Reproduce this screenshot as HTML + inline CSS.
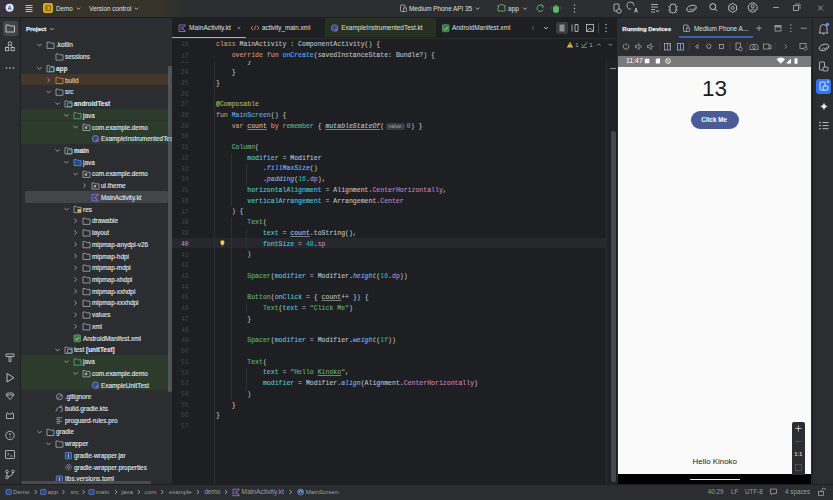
<!DOCTYPE html><html><head><meta charset='utf-8'><style>
*{margin:0;padding:0;box-sizing:border-box}
html,body{width:833px;height:500px;overflow:hidden;background:#2B2D30;font-family:"Liberation Sans",sans-serif;color:#DFE1E5}
.a{position:absolute}
.t{position:absolute;white-space:nowrap;line-height:1}
.code{position:absolute;white-space:pre;font-family:"Liberation Mono",monospace;font-size:6.53px;color:#BCBEC4;-webkit-text-stroke:0.12px currentColor}
.ln{position:absolute;font-family:"Liberation Mono",monospace;font-size:6.3px;color:#41444A;text-align:right;width:20px;white-space:pre}
.hint{display:inline-block;background:#393B40;color:#8C8F94;font-family:"Liberation Sans",sans-serif;font-size:5.5px;border-radius:2px;padding:0 2px;margin:0 2px 0 2px;line-height:7px;vertical-align:0px}
.row{position:absolute;left:20px;width:148px;height:11.73px}
.tree{position:absolute;white-space:nowrap;font-size:6.6px;color:#DFE1E5;line-height:1;-webkit-text-stroke:0.15px currentColor}
svg{position:absolute;overflow:visible}
</style></head><body>
<div class='a' style='left:0;top:0;width:833px;height:17px;background:linear-gradient(90deg,#37313F 0px,#37332A 35px,#36332A 160px,#2B2D30 192px)'></div>
<div class='a' style='left:0;top:17px;width:833px;height:1px;background:#1E1F22'></div>
<div class='a' style='left:20px;top:18px;width:1px;height:466px;background:#1E1F22'></div>
<div class='a' style='left:172px;top:18px;width:444px;height:466px;background:#1E1F22'></div>
<div class='a' style='left:616px;top:18px;width:1px;height:466px;background:#1E1F22'></div>
<div class='a' style='left:812px;top:18px;width:1px;height:466px;background:#1E1F22'></div>
<div class='a' style='left:0;top:484px;width:833px;height:1px;background:#1E1F22'></div>
<div class='a' style='left:172px;top:238.3px;width:434px;height:10.2px;background:#26282E'></div>
<div class='a' style='left:214px;top:60px;width:0.8px;height:424px;background:#2C2E31'></div>
<div class='a' style='left:230.68px;top:217.92px;width:0.8px;height:182.41px;background:#2E3033'></div>
<div class='a' style='left:230.68px;top:153.54px;width:0.8px;height:53.65px;background:#2E3033'></div>
<div class='a' style='left:246.36px;top:164.27px;width:0.8px;height:21.46px;background:#2E3033'></div>
<div class='a' style='left:246.36px;top:368.14px;width:0.8px;height:21.46px;background:#2E3033'></div>
<div class='a' style='left:246.36px;top:228.65px;width:0.8px;height:21.46px;background:#2E3033'></div>
<div class='a' style='left:246.36px;top:303.76px;width:0.8px;height:10.73px;background:#2E3033'></div>
<div class='ln' style='left:168.5px;top:58.37px;'>23</div>
<div class='code' style='left:216.0px;top:58.17px'><span style='color:#BCBEC4;'>        }</span></div>
<div class='ln' style='left:168.5px;top:69.10px;'>24</div>
<div class='code' style='left:216.0px;top:68.90px'><span style='color:#BCBEC4;'>    }</span></div>
<div class='ln' style='left:168.5px;top:79.83px;'>25</div>
<div class='code' style='left:216.0px;top:79.63px'><span style='color:#BCBEC4;'>}</span></div>
<div class='ln' style='left:168.5px;top:90.56px;'>26</div>
<div class='code' style='left:216.0px;top:90.36px'></div>
<div class='ln' style='left:168.5px;top:101.29px;'>27</div>
<div class='code' style='left:216.0px;top:101.09px'><span style='color:#B3AE60;'>@Composable</span></div>
<div class='ln' style='left:168.5px;top:112.02px;'>28</div>
<div class='code' style='left:216.0px;top:111.82px'><span style='color:#CF8E6D;'>fun </span><span style='color:#56A8F5;'>MainScreen</span><span style='color:#BCBEC4;'>() {</span></div>
<div class='ln' style='left:168.5px;top:122.75px;'>29</div>
<div class='code' style='left:216.0px;top:122.55px'><span style='color:#BCBEC4;'>    </span><span style='color:#CF8E6D;'>var </span><span style='color:#BCBEC4;text-decoration:underline;text-decoration-color:rgba(188,190,196,.6);text-underline-offset:1px;'>count</span><span style='color:#CF8E6D;'> by </span><span style='color:#5FAE80;'>remember</span><span style='color:#BCBEC4;'> { </span><span style='color:#BCBEC4;font-style:italic;text-decoration:underline;text-decoration-color:rgba(188,190,196,.6);text-underline-offset:1px;'>mutableStateOf</span><span style='color:#BCBEC4;'>(</span><span class='hint'>value:</span><span style='color:#2AACB8;'>0</span><span style='color:#BCBEC4;'>) }</span></div>
<div class='ln' style='left:168.5px;top:133.48px;'>30</div>
<div class='code' style='left:216.0px;top:133.28px'></div>
<div class='ln' style='left:168.5px;top:144.21px;'>31</div>
<div class='code' style='left:216.0px;top:144.01px'><span style='color:#BCBEC4;'>    </span><span style='color:#5FAE80;'>Column</span><span style='color:#BCBEC4;'>(</span></div>
<div class='ln' style='left:168.5px;top:154.94px;'>32</div>
<div class='code' style='left:216.0px;top:154.74px'><span style='color:#BCBEC4;'>        </span><span style='color:#56C1D6;'>modifier</span><span style='color:#BCBEC4;'> = Modifier</span></div>
<div class='ln' style='left:168.5px;top:165.67px;'>33</div>
<div class='code' style='left:216.0px;top:165.47px'><span style='color:#BCBEC4;'>            .</span><span style='color:#78AEF0;font-style:italic;'>fillMaxSize</span><span style='color:#BCBEC4;'>()</span></div>
<div class='ln' style='left:168.5px;top:176.40px;'>34</div>
<div class='code' style='left:216.0px;top:176.20px'><span style='color:#BCBEC4;'>            .</span><span style='color:#78AEF0;font-style:italic;'>padding</span><span style='color:#BCBEC4;'>(</span><span style='color:#2AACB8;'>16</span><span style='color:#BCBEC4;'>.</span><span style='color:#C77DBB;'>dp</span><span style='color:#BCBEC4;'>),</span></div>
<div class='ln' style='left:168.5px;top:187.13px;'>35</div>
<div class='code' style='left:216.0px;top:186.93px'><span style='color:#BCBEC4;'>        </span><span style='color:#56C1D6;'>horizontalAlignment</span><span style='color:#BCBEC4;'> = Alignment.</span><span style='color:#C77DBB;'>CenterHorizontally</span><span style='color:#BCBEC4;'>,</span></div>
<div class='ln' style='left:168.5px;top:197.86px;'>36</div>
<div class='code' style='left:216.0px;top:197.66px'><span style='color:#BCBEC4;'>        </span><span style='color:#56C1D6;'>verticalArrangement</span><span style='color:#BCBEC4;'> = Arrangement.</span><span style='color:#C77DBB;'>Center</span></div>
<div class='ln' style='left:168.5px;top:208.59px;'>37</div>
<div class='code' style='left:216.0px;top:208.39px'><span style='color:#BCBEC4;'>    ) {</span></div>
<div class='ln' style='left:168.5px;top:219.32px;'>38</div>
<div class='code' style='left:216.0px;top:219.12px'><span style='color:#BCBEC4;'>        </span><span style='color:#5FAE80;'>Text</span><span style='color:#BCBEC4;'>(</span></div>
<div class='ln' style='left:168.5px;top:230.05px;'>39</div>
<div class='code' style='left:216.0px;top:229.85px'><span style='color:#BCBEC4;'>            </span><span style='color:#56C1D6;'>text</span><span style='color:#BCBEC4;'> = </span><span style='color:#BCBEC4;text-decoration:underline;text-decoration-color:rgba(188,190,196,.6);text-underline-offset:1px;'>count</span><span style='color:#BCBEC4;'>.toString(),</span></div>
<div class='ln' style='left:168.5px;top:240.78px;color:#A8ADB5'>40</div>
<div class='code' style='left:216.0px;top:240.58px'><span style='color:#BCBEC4;'>            </span><span style='color:#56C1D6;'>fontSize</span><span style='color:#BCBEC4;'> = </span><span style='color:#2AACB8;'>48</span><span style='color:#BCBEC4;'>.</span><span style='color:#C77DBB;'>sp</span></div>
<div class='ln' style='left:168.5px;top:251.51px;'>41</div>
<div class='code' style='left:216.0px;top:251.31px'><span style='color:#BCBEC4;'>        )</span></div>
<div class='ln' style='left:168.5px;top:262.24px;'>42</div>
<div class='code' style='left:216.0px;top:262.04px'></div>
<div class='ln' style='left:168.5px;top:272.97px;'>43</div>
<div class='code' style='left:216.0px;top:272.77px'><span style='color:#BCBEC4;'>        </span><span style='color:#5FAE80;'>Spacer</span><span style='color:#BCBEC4;'>(</span><span style='color:#56C1D6;'>modifier</span><span style='color:#BCBEC4;'> = Modifier.</span><span style='color:#78AEF0;font-style:italic;'>height</span><span style='color:#BCBEC4;'>(</span><span style='color:#2AACB8;'>16</span><span style='color:#BCBEC4;'>.</span><span style='color:#C77DBB;'>dp</span><span style='color:#BCBEC4;'>))</span></div>
<div class='ln' style='left:168.5px;top:283.70px;'>44</div>
<div class='code' style='left:216.0px;top:283.50px'></div>
<div class='ln' style='left:168.5px;top:294.43px;'>45</div>
<div class='code' style='left:216.0px;top:294.23px'><span style='color:#BCBEC4;'>        </span><span style='color:#5FAE80;'>Button</span><span style='color:#BCBEC4;'>(</span><span style='color:#56C1D6;'>onClick</span><span style='color:#BCBEC4;'> = { </span><span style='color:#BCBEC4;text-decoration:underline;text-decoration-color:rgba(188,190,196,.6);text-underline-offset:1px;'>count</span><span style='color:#BCBEC4;'>++ }) {</span></div>
<div class='ln' style='left:168.5px;top:305.16px;'>46</div>
<div class='code' style='left:216.0px;top:304.96px'><span style='color:#BCBEC4;'>            </span><span style='color:#5FAE80;'>Text</span><span style='color:#BCBEC4;'>(</span><span style='color:#56C1D6;'>text</span><span style='color:#BCBEC4;'> = </span><span style='color:#6AAB73;'>&quot;Click Me&quot;</span><span style='color:#BCBEC4;'>)</span></div>
<div class='ln' style='left:168.5px;top:315.89px;'>47</div>
<div class='code' style='left:216.0px;top:315.69px'><span style='color:#BCBEC4;'>        }</span></div>
<div class='ln' style='left:168.5px;top:326.62px;'>48</div>
<div class='code' style='left:216.0px;top:326.42px'></div>
<div class='ln' style='left:168.5px;top:337.35px;'>49</div>
<div class='code' style='left:216.0px;top:337.15px'><span style='color:#BCBEC4;'>        </span><span style='color:#5FAE80;'>Spacer</span><span style='color:#BCBEC4;'>(</span><span style='color:#56C1D6;'>modifier</span><span style='color:#BCBEC4;'> = Modifier.</span><span style='color:#78AEF0;font-style:italic;'>weight</span><span style='color:#BCBEC4;'>(</span><span style='color:#2AACB8;'>1f</span><span style='color:#BCBEC4;'>))</span></div>
<div class='ln' style='left:168.5px;top:348.08px;'>50</div>
<div class='code' style='left:216.0px;top:347.88px'></div>
<div class='ln' style='left:168.5px;top:358.81px;'>51</div>
<div class='code' style='left:216.0px;top:358.61px'><span style='color:#BCBEC4;'>        </span><span style='color:#5FAE80;'>Text</span><span style='color:#BCBEC4;'>(</span></div>
<div class='ln' style='left:168.5px;top:369.54px;'>52</div>
<div class='code' style='left:216.0px;top:369.34px'><span style='color:#BCBEC4;'>            </span><span style='color:#56C1D6;'>text</span><span style='color:#BCBEC4;'> = </span><span style='color:#6AAB73;'>&quot;Hello </span><span style='color:#6AAB73;text-decoration:underline;text-decoration-color:rgba(188,190,196,.6);text-underline-offset:1px;'>Kinoko</span><span style='color:#6AAB73;'>&quot;</span><span style='color:#BCBEC4;'>,</span></div>
<div class='ln' style='left:168.5px;top:380.27px;'>53</div>
<div class='code' style='left:216.0px;top:380.07px'><span style='color:#BCBEC4;'>            </span><span style='color:#56C1D6;'>modifier</span><span style='color:#BCBEC4;'> = Modifier.</span><span style='color:#78AEF0;font-style:italic;'>align</span><span style='color:#BCBEC4;'>(</span><span style='color:#BCBEC4;'>Alignment.</span><span style='color:#C77DBB;'>CenterHorizontally</span><span style='color:#BCBEC4;'>)</span></div>
<div class='ln' style='left:168.5px;top:391.00px;'>54</div>
<div class='code' style='left:216.0px;top:390.80px'><span style='color:#BCBEC4;'>        )</span></div>
<div class='ln' style='left:168.5px;top:401.73px;'>55</div>
<div class='code' style='left:216.0px;top:401.53px'><span style='color:#BCBEC4;'>    }</span></div>
<div class='ln' style='left:168.5px;top:412.46px;'>56</div>
<div class='code' style='left:216.0px;top:412.26px'><span style='color:#BCBEC4;'>}</span></div>
<div class='ln' style='left:168.5px;top:423.19px;'>57</div>
<div class='code' style='left:216.0px;top:422.99px'></div>
<svg style='left:0;top:0' width='1' height='1'><path d='M220.3 242.3 a2.1 2.1 0 1 1 4.2 0 q0 1.1 -0.9 1.9 v0.9 h-2.4 v-0.9 q-0.9 -0.8 -0.9 -1.9 z' fill='#F2C94C'/><path d='M221.4 246 h2' stroke='#C9A030' stroke-width='0.6'/></svg>
<div class='a' style='left:172px;top:38px;width:434px;height:23px;background:#1E1F22;'></div>
<div class='ln' style='left:168.5px;top:41.00px'>16</div>
<div class='code' style='left:216.0px;top:40.80px'><span style='color:#CF8E6D;'>class </span><span style='color:#BCBEC4;'>MainActivity : ComponentActivity() {</span></div>
<div class='ln' style='left:168.5px;top:52.60px'>17</div>
<div class='code' style='left:216.0px;top:52.40px'><span style='color:#BCBEC4;'>    </span><span style='color:#CF8E6D;'>override fun </span><span style='color:#56A8F5;'>onCreate</span><span style='color:#BCBEC4;'>(savedInstanceState: Bundle?) {</span></div>
<div class='t' style='left:26px;top:25.6px;font-size:6px;font-weight:bold;color:#E6E8EC;-webkit-text-stroke:0.25px #E6E8EC'>Project</div>
<svg style='left:0;top:0' width='1' height='1'><polyline points='49.80,28.00 51.80,30.00 53.80,28.00' fill='none' stroke='#A8ADB5' stroke-width='1'/></svg>
<div class='a' style='left:21px;top:38px;width:151px;height:446px;overflow:hidden'>
<svg style='left:0;top:0' width='1' height='1'><polyline points='16.40,5.85 18.50,7.95 20.60,5.85' fill='none' stroke='#9A9EA5' stroke-width='1'/></svg>
<svg style='left:0;top:0' width='1' height='1'><path d='M26.00 4.20 h2.6 l0.8 0.9 h3.6 v5.3 h-7 z' fill='none' stroke='#A8ADB5' stroke-width='0.8' stroke-linejoin='round'/></svg>
<div class='tree' style='left:35.00px;top:4.40px;font-size:6.4px;font-weight:normal;color:#DFE1E5'>.kotlin</div>
<svg style='left:0;top:0' width='1' height='1'><path d='M35.00 15.93 h2.6 l0.8 0.9 h3.6 v5.3 h-7 z' fill='none' stroke='#A8ADB5' stroke-width='0.8' stroke-linejoin='round'/></svg>
<div class='tree' style='left:44.00px;top:16.13px;font-size:6.4px;font-weight:normal;color:#DFE1E5'>sessions</div>
<svg style='left:0;top:0' width='1' height='1'><polyline points='16.40,29.31 18.50,31.41 20.60,29.31' fill='none' stroke='#9A9EA5' stroke-width='1'/></svg>
<svg style='left:0;top:0' width='1' height='1'><path d='M26.00 27.66 h2.6 l0.8 0.9 h3.6 v5.3 h-7 z' fill='none' stroke='#A8ADB5' stroke-width='0.8' stroke-linejoin='round'/><rect x='28.50' y='29.86' width='4.5' height='3.5' fill='none' stroke='#5FB3A0' stroke-width='0.8'/></svg>
<div class='tree' style='left:35.00px;top:27.86px;font-size:6.4px;font-weight:bold;color:#DFE1E5'>app</div>
<div class='a' style='left:0px;top:35.59px;width:148px;height:11.73px;background:#44372A'></div>
<svg style='left:0;top:0' width='1' height='1'><polyline points='26.45,39.99 28.55,42.09 26.45,44.19' fill='none' stroke='#9A9EA5' stroke-width='1'/></svg>
<svg style='left:0;top:0' width='1' height='1'><path d='M35.00 39.39 h2.6 l0.8 0.9 h3.6 v5.3 h-7 z' fill='none' stroke='#D08A5A' stroke-width='0.8' stroke-linejoin='round'/></svg>
<div class='tree' style='left:44.00px;top:39.59px;font-size:6.4px;font-weight:normal;color:#D8C6A4'>build</div>
<svg style='left:0;top:0' width='1' height='1'><polyline points='25.40,52.77 27.50,54.87 29.60,52.77' fill='none' stroke='#9A9EA5' stroke-width='1'/></svg>
<svg style='left:0;top:0' width='1' height='1'><path d='M35.00 51.12 h2.6 l0.8 0.9 h3.6 v5.3 h-7 z' fill='none' stroke='#A8ADB5' stroke-width='0.8' stroke-linejoin='round'/></svg>
<div class='tree' style='left:44.00px;top:51.32px;font-size:6.4px;font-weight:normal;color:#DFE1E5'>src</div>
<svg style='left:0;top:0' width='1' height='1'><polyline points='34.40,64.50 36.50,66.60 38.60,64.50' fill='none' stroke='#9A9EA5' stroke-width='1'/></svg>
<svg style='left:0;top:0' width='1' height='1'><path d='M44.00 62.85 h2.6 l0.8 0.9 h3.6 v5.3 h-7 z' fill='none' stroke='#A8ADB5' stroke-width='0.8' stroke-linejoin='round'/><rect x='46.50' y='65.05' width='4.5' height='3.5' fill='none' stroke='#5FB3A0' stroke-width='0.8'/></svg>
<div class='tree' style='left:53.00px;top:63.05px;font-size:6.4px;font-weight:bold;color:#DFE1E5'>androidTest</div>
<div class='a' style='left:0px;top:70.78px;width:148px;height:11.73px;background:#2C3B2B'></div>
<svg style='left:0;top:0' width='1' height='1'><polyline points='43.40,76.23 45.50,78.33 47.60,76.23' fill='none' stroke='#9A9EA5' stroke-width='1'/></svg>
<svg style='left:0;top:0' width='1' height='1'><path d='M53.00 74.58 h2.6 l0.8 0.9 h3.6 v5.3 h-7 z' fill='none' stroke='#5FAE6A' stroke-width='0.8' stroke-linejoin='round'/></svg>
<div class='tree' style='left:62.00px;top:74.78px;font-size:6.4px;font-weight:normal;color:#DFE1E5'>java</div>
<div class='a' style='left:0px;top:82.51px;width:148px;height:11.73px;background:#2C3B2B'></div>
<svg style='left:0;top:0' width='1' height='1'><polyline points='52.40,87.96 54.50,90.06 56.60,87.96' fill='none' stroke='#9A9EA5' stroke-width='1'/></svg>
<svg style='left:0;top:0' width='1' height='1'><path d='M62.00 86.31 h2.6 l0.8 0.9 h3.6 v5.3 h-7 z' fill='none' stroke='#A8ADB5' stroke-width='0.8' stroke-linejoin='round'/><rect x='63.80' y='88.41' width='2.4' height='2.4' fill='#A8ADB5'/></svg>
<div class='tree' style='left:71.00px;top:86.51px;font-size:6.4px;font-weight:normal;color:#DFE1E5'>com.example.demo</div>
<div class='a' style='left:0px;top:94.24px;width:148px;height:11.73px;background:#2C3B2B'></div>
<svg style='left:0;top:0' width='1' height='1'><circle cx='74.50' cy='100.74' r='3.3' fill='#3B4A7A' stroke='#6E8FE8' stroke-width='0.7'/><circle cx='76.30' cy='102.54' r='1.6' fill='#8A5CC0'/></svg>
<div class='tree' style='left:80.00px;top:98.24px;font-size:6.4px;font-weight:normal;color:#DFE1E5'>ExampleInstrumentedTest</div>
<svg style='left:0;top:0' width='1' height='1'><polyline points='34.40,111.42 36.50,113.52 38.60,111.42' fill='none' stroke='#9A9EA5' stroke-width='1'/></svg>
<svg style='left:0;top:0' width='1' height='1'><path d='M44.00 109.77 h2.6 l0.8 0.9 h3.6 v5.3 h-7 z' fill='none' stroke='#A8ADB5' stroke-width='0.8' stroke-linejoin='round'/><rect x='46.50' y='111.97' width='4.5' height='3.5' fill='none' stroke='#5FB3A0' stroke-width='0.8'/></svg>
<div class='tree' style='left:53.00px;top:109.97px;font-size:6.4px;font-weight:bold;color:#DFE1E5'>main</div>
<svg style='left:0;top:0' width='1' height='1'><polyline points='43.40,123.15 45.50,125.25 47.60,123.15' fill='none' stroke='#9A9EA5' stroke-width='1'/></svg>
<svg style='left:0;top:0' width='1' height='1'><path d='M53.00 121.50 h2.6 l0.8 0.9 h3.6 v5.3 h-7 z' fill='#2F4A7A' stroke='#548AF7' stroke-width='0.8' stroke-linejoin='round'/></svg>
<div class='tree' style='left:62.00px;top:121.70px;font-size:6.4px;font-weight:normal;color:#DFE1E5'>java</div>
<svg style='left:0;top:0' width='1' height='1'><polyline points='52.40,134.88 54.50,136.98 56.60,134.88' fill='none' stroke='#9A9EA5' stroke-width='1'/></svg>
<svg style='left:0;top:0' width='1' height='1'><path d='M62.00 133.23 h2.6 l0.8 0.9 h3.6 v5.3 h-7 z' fill='none' stroke='#A8ADB5' stroke-width='0.8' stroke-linejoin='round'/><rect x='63.80' y='135.33' width='2.4' height='2.4' fill='#A8ADB5'/></svg>
<div class='tree' style='left:71.00px;top:133.43px;font-size:6.4px;font-weight:normal;color:#DFE1E5'>com.example.demo</div>
<svg style='left:0;top:0' width='1' height='1'><polyline points='62.45,145.56 64.55,147.66 62.45,149.76' fill='none' stroke='#9A9EA5' stroke-width='1'/></svg>
<svg style='left:0;top:0' width='1' height='1'><path d='M71.00 144.96 h2.6 l0.8 0.9 h3.6 v5.3 h-7 z' fill='none' stroke='#A8ADB5' stroke-width='0.8' stroke-linejoin='round'/><rect x='72.80' y='147.06' width='2.4' height='2.4' fill='#A8ADB5'/></svg>
<div class='tree' style='left:80.00px;top:145.16px;font-size:6.4px;font-weight:normal;color:#DFE1E5'>ui.theme</div>
<div class='a' style='left:4px;top:153.49px;width:143px;height:11.5px;background:#43454A;border-radius:2px'></div>
<svg style='left:0;top:0' width='1' height='1'><path d='M77.50 156.39 h-6.5 v6.5 h6.5' fill='none' stroke='#8E6BD6' stroke-width='0.9'/><path d='M77.30 156.79 L74.00 159.64 L77.30 162.49' fill='none' stroke='#A385E8' stroke-width='0.9'/><rect x='72.50' y='157.89' width='1.2' height='3.5' fill='#6A4FB0'/></svg>
<div class='tree' style='left:80.00px;top:156.89px;font-size:6.4px;font-weight:normal;color:#DFE1E5'>MainActivity.kt</div>
<svg style='left:0;top:0' width='1' height='1'><polyline points='43.40,170.07 45.50,172.17 47.60,170.07' fill='none' stroke='#9A9EA5' stroke-width='1'/></svg>
<svg style='left:0;top:0' width='1' height='1'><path d='M53.00 168.42 h2.6 l0.8 0.9 h3.6 v5.3 h-7 z' fill='none' stroke='#A8ADB5' stroke-width='0.8' stroke-linejoin='round'/><rect x='56.50' y='171.12' width='3.5' height='3' fill='#E0B24A'/></svg>
<div class='tree' style='left:62.00px;top:168.62px;font-size:6.4px;font-weight:normal;color:#DFE1E5'>res</div>
<svg style='left:0;top:0' width='1' height='1'><polyline points='53.45,180.75 55.55,182.85 53.45,184.95' fill='none' stroke='#9A9EA5' stroke-width='1'/></svg>
<svg style='left:0;top:0' width='1' height='1'><path d='M62.00 180.15 h2.6 l0.8 0.9 h3.6 v5.3 h-7 z' fill='none' stroke='#A8ADB5' stroke-width='0.8' stroke-linejoin='round'/></svg>
<div class='tree' style='left:71.00px;top:180.35px;font-size:6.4px;font-weight:normal;color:#DFE1E5'>drawable</div>
<svg style='left:0;top:0' width='1' height='1'><polyline points='53.45,192.48 55.55,194.58 53.45,196.68' fill='none' stroke='#9A9EA5' stroke-width='1'/></svg>
<svg style='left:0;top:0' width='1' height='1'><path d='M62.00 191.88 h2.6 l0.8 0.9 h3.6 v5.3 h-7 z' fill='none' stroke='#A8ADB5' stroke-width='0.8' stroke-linejoin='round'/></svg>
<div class='tree' style='left:71.00px;top:192.08px;font-size:6.4px;font-weight:normal;color:#DFE1E5'>layout</div>
<svg style='left:0;top:0' width='1' height='1'><polyline points='53.45,204.21 55.55,206.31 53.45,208.41' fill='none' stroke='#9A9EA5' stroke-width='1'/></svg>
<svg style='left:0;top:0' width='1' height='1'><path d='M62.00 203.61 h2.6 l0.8 0.9 h3.6 v5.3 h-7 z' fill='none' stroke='#A8ADB5' stroke-width='0.8' stroke-linejoin='round'/></svg>
<div class='tree' style='left:71.00px;top:203.81px;font-size:6.4px;font-weight:normal;color:#DFE1E5'>mipmap-anydpi-v26</div>
<svg style='left:0;top:0' width='1' height='1'><polyline points='53.45,215.94 55.55,218.04 53.45,220.14' fill='none' stroke='#9A9EA5' stroke-width='1'/></svg>
<svg style='left:0;top:0' width='1' height='1'><path d='M62.00 215.34 h2.6 l0.8 0.9 h3.6 v5.3 h-7 z' fill='none' stroke='#A8ADB5' stroke-width='0.8' stroke-linejoin='round'/></svg>
<div class='tree' style='left:71.00px;top:215.54px;font-size:6.4px;font-weight:normal;color:#DFE1E5'>mipmap-hdpi</div>
<svg style='left:0;top:0' width='1' height='1'><polyline points='53.45,227.67 55.55,229.77 53.45,231.87' fill='none' stroke='#9A9EA5' stroke-width='1'/></svg>
<svg style='left:0;top:0' width='1' height='1'><path d='M62.00 227.07 h2.6 l0.8 0.9 h3.6 v5.3 h-7 z' fill='none' stroke='#A8ADB5' stroke-width='0.8' stroke-linejoin='round'/></svg>
<div class='tree' style='left:71.00px;top:227.27px;font-size:6.4px;font-weight:normal;color:#DFE1E5'>mipmap-mdpi</div>
<svg style='left:0;top:0' width='1' height='1'><polyline points='53.45,239.40 55.55,241.50 53.45,243.60' fill='none' stroke='#9A9EA5' stroke-width='1'/></svg>
<svg style='left:0;top:0' width='1' height='1'><path d='M62.00 238.80 h2.6 l0.8 0.9 h3.6 v5.3 h-7 z' fill='none' stroke='#A8ADB5' stroke-width='0.8' stroke-linejoin='round'/></svg>
<div class='tree' style='left:71.00px;top:239.00px;font-size:6.4px;font-weight:normal;color:#DFE1E5'>mipmap-xhdpi</div>
<svg style='left:0;top:0' width='1' height='1'><polyline points='53.45,251.13 55.55,253.23 53.45,255.33' fill='none' stroke='#9A9EA5' stroke-width='1'/></svg>
<svg style='left:0;top:0' width='1' height='1'><path d='M62.00 250.53 h2.6 l0.8 0.9 h3.6 v5.3 h-7 z' fill='none' stroke='#A8ADB5' stroke-width='0.8' stroke-linejoin='round'/></svg>
<div class='tree' style='left:71.00px;top:250.73px;font-size:6.4px;font-weight:normal;color:#DFE1E5'>mipmap-xxhdpi</div>
<svg style='left:0;top:0' width='1' height='1'><polyline points='53.45,262.86 55.55,264.96 53.45,267.06' fill='none' stroke='#9A9EA5' stroke-width='1'/></svg>
<svg style='left:0;top:0' width='1' height='1'><path d='M62.00 262.26 h2.6 l0.8 0.9 h3.6 v5.3 h-7 z' fill='none' stroke='#A8ADB5' stroke-width='0.8' stroke-linejoin='round'/></svg>
<div class='tree' style='left:71.00px;top:262.46px;font-size:6.4px;font-weight:normal;color:#DFE1E5'>mipmap-xxxhdpi</div>
<svg style='left:0;top:0' width='1' height='1'><polyline points='53.45,274.59 55.55,276.69 53.45,278.79' fill='none' stroke='#9A9EA5' stroke-width='1'/></svg>
<svg style='left:0;top:0' width='1' height='1'><path d='M62.00 273.99 h2.6 l0.8 0.9 h3.6 v5.3 h-7 z' fill='none' stroke='#A8ADB5' stroke-width='0.8' stroke-linejoin='round'/></svg>
<div class='tree' style='left:71.00px;top:274.19px;font-size:6.4px;font-weight:normal;color:#DFE1E5'>values</div>
<svg style='left:0;top:0' width='1' height='1'><polyline points='53.45,286.32 55.55,288.42 53.45,290.52' fill='none' stroke='#9A9EA5' stroke-width='1'/></svg>
<svg style='left:0;top:0' width='1' height='1'><path d='M62.00 285.72 h2.6 l0.8 0.9 h3.6 v5.3 h-7 z' fill='none' stroke='#A8ADB5' stroke-width='0.8' stroke-linejoin='round'/></svg>
<div class='tree' style='left:71.00px;top:285.92px;font-size:6.4px;font-weight:normal;color:#DFE1E5'>xml</div>
<svg style='left:0;top:0' width='1' height='1'><rect x='53.00' y='296.85' width='6.5' height='7' rx='0.8' fill='#3E7A48' stroke='#5FB86A' stroke-width='0.6'/><path d='M54.50 300.65 l1.5 1.5 l2.2 -3' fill='none' stroke='#D8F0D8' stroke-width='0.7'/></svg>
<div class='tree' style='left:62.00px;top:297.65px;font-size:6.4px;font-weight:normal;color:#DFE1E5'>AndroidManifest.xml</div>
<svg style='left:0;top:0' width='1' height='1'><polyline points='34.40,310.83 36.50,312.93 38.60,310.83' fill='none' stroke='#9A9EA5' stroke-width='1'/></svg>
<svg style='left:0;top:0' width='1' height='1'><path d='M44.00 309.18 h2.6 l0.8 0.9 h3.6 v5.3 h-7 z' fill='none' stroke='#A8ADB5' stroke-width='0.8' stroke-linejoin='round'/><rect x='46.50' y='311.38' width='4.5' height='3.5' fill='none' stroke='#5FB3A0' stroke-width='0.8'/></svg>
<div class='tree' style='left:53.00px;top:309.38px;font-size:6.4px;font-weight:normal;color:#DFE1E5'>test <b>[unitTest]</b></div>
<div class='a' style='left:0px;top:317.11px;width:148px;height:11.73px;background:#2C3B2B'></div>
<svg style='left:0;top:0' width='1' height='1'><polyline points='43.40,322.56 45.50,324.66 47.60,322.56' fill='none' stroke='#9A9EA5' stroke-width='1'/></svg>
<svg style='left:0;top:0' width='1' height='1'><path d='M53.00 320.91 h2.6 l0.8 0.9 h3.6 v5.3 h-7 z' fill='none' stroke='#5FAE6A' stroke-width='0.8' stroke-linejoin='round'/></svg>
<div class='tree' style='left:62.00px;top:321.11px;font-size:6.4px;font-weight:normal;color:#DFE1E5'>java</div>
<div class='a' style='left:0px;top:328.84px;width:148px;height:11.73px;background:#2C3B2B'></div>
<svg style='left:0;top:0' width='1' height='1'><polyline points='52.40,334.29 54.50,336.39 56.60,334.29' fill='none' stroke='#9A9EA5' stroke-width='1'/></svg>
<svg style='left:0;top:0' width='1' height='1'><path d='M62.00 332.64 h2.6 l0.8 0.9 h3.6 v5.3 h-7 z' fill='none' stroke='#A8ADB5' stroke-width='0.8' stroke-linejoin='round'/><rect x='63.80' y='334.74' width='2.4' height='2.4' fill='#A8ADB5'/></svg>
<div class='tree' style='left:71.00px;top:332.84px;font-size:6.4px;font-weight:normal;color:#DFE1E5'>com.example.demo</div>
<div class='a' style='left:0px;top:340.57px;width:148px;height:11.73px;background:#2C3B2B'></div>
<svg style='left:0;top:0' width='1' height='1'><circle cx='74.50' cy='347.07' r='3.3' fill='#3B4A7A' stroke='#6E8FE8' stroke-width='0.7'/><circle cx='76.30' cy='348.87' r='1.6' fill='#8A5CC0'/></svg>
<div class='tree' style='left:80.00px;top:344.57px;font-size:6.4px;font-weight:normal;color:#DFE1E5'>ExampleUnitTest</div>
<svg style='left:0;top:0' width='1' height='1'><circle cx='38.50' cy='358.80' r='3' fill='none' stroke='#A8ADB5' stroke-width='0.8'/><path d='M36.50 360.80 L40.50 356.80' stroke='#A8ADB5' stroke-width='0.8'/></svg>
<div class='tree' style='left:44.00px;top:356.30px;font-size:6.4px;font-weight:normal;color:#DFE1E5'>.gitignore</div>
<svg style='left:0;top:0' width='1' height='1'><path d='M35.00 373.53 q0.5 -4 3.5 -4.5 q3 0 3 2.5 q0 2 -2 2' fill='none' stroke='#A8ADB5' stroke-width='0.8'/><circle cx='40.00' cy='368.53' r='1' fill='none' stroke='#7FA8E8' stroke-width='0.6'/></svg>
<div class='tree' style='left:44.00px;top:368.03px;font-size:6.4px;font-weight:normal;color:#DFE1E5'>build.gradle.kts</div>
<svg style='left:0;top:0' width='1' height='1'><path d='M35.50 379.76 h5.5 M35.50 381.56 h3.5 M35.50 383.36 h5.5 M35.50 385.16 h3.5' stroke='#A8ADB5' stroke-width='0.8'/></svg>
<div class='tree' style='left:44.00px;top:379.76px;font-size:6.4px;font-weight:normal;color:#DFE1E5'>proguard-rules.pro</div>
<svg style='left:0;top:0' width='1' height='1'><polyline points='16.40,392.94 18.50,395.04 20.60,392.94' fill='none' stroke='#9A9EA5' stroke-width='1'/></svg>
<svg style='left:0;top:0' width='1' height='1'><path d='M26.00 391.29 h2.6 l0.8 0.9 h3.6 v5.3 h-7 z' fill='none' stroke='#A8ADB5' stroke-width='0.8' stroke-linejoin='round'/></svg>
<div class='tree' style='left:35.00px;top:391.49px;font-size:6.4px;font-weight:normal;color:#DFE1E5'>gradle</div>
<svg style='left:0;top:0' width='1' height='1'><polyline points='25.40,404.67 27.50,406.77 29.60,404.67' fill='none' stroke='#9A9EA5' stroke-width='1'/></svg>
<svg style='left:0;top:0' width='1' height='1'><path d='M35.00 403.02 h2.6 l0.8 0.9 h3.6 v5.3 h-7 z' fill='none' stroke='#A8ADB5' stroke-width='0.8' stroke-linejoin='round'/></svg>
<div class='tree' style='left:44.00px;top:403.22px;font-size:6.4px;font-weight:normal;color:#DFE1E5'>wrapper</div>
<svg style='left:0;top:0' width='1' height='1'><rect x='44.30' y='414.45' width='6.2' height='6.5' rx='0.6' fill='#2F4A7A' stroke='#6E8FE8' stroke-width='0.7'/><path d='M47.50 415.75 v4' stroke='#C8D8F8' stroke-width='0.8'/></svg>
<div class='tree' style='left:53.00px;top:414.95px;font-size:6.4px;font-weight:normal;color:#DFE1E5'>gradle-wrapper.jar</div>
<svg style='left:0;top:0' width='1' height='1'><circle cx='47.50' cy='429.18' r='2.8' fill='none' stroke='#A8ADB5' stroke-width='0.9' stroke-dasharray='1.2 0.7'/><circle cx='47.50' cy='429.18' r='1.1' fill='none' stroke='#A8ADB5' stroke-width='0.7'/></svg>
<div class='tree' style='left:53.00px;top:426.68px;font-size:6.4px;font-weight:normal;color:#DFE1E5'>gradle-wrapper.properties</div>
<svg style='left:0;top:0' width='1' height='1'><rect x='35.30' y='437.91' width='6.2' height='6.5' rx='0.6' fill='#2F4A7A' stroke='#6E8FE8' stroke-width='0.7'/><path d='M38.50 439.21 v4' stroke='#C8D8F8' stroke-width='0.8'/></svg>
<div class='tree' style='left:44.00px;top:438.41px;font-size:6.4px;font-weight:normal;color:#DFE1E5'>libs.versions.toml</div>
</div>
<div class='a' style='left:168px;top:66px;width:4px;height:326px;background:rgba(130,134,140,0.42);border-radius:1px'></div>
<div class='a' style='left:21px;top:481px;width:130px;height:3px;background:#4A4C50;border-radius:2px'></div>
<svg style='left:0;top:0' width='1' height='1'><circle cx='9.6' cy='7.8' r='4' fill='#E6EAF4'/><path d='M8 10 L9.6 5.6 L11.2 10 M8.6 8.6 h2' stroke='#3D5BA8' stroke-width='0.9' fill='none'/></svg>
<svg style='left:0;top:0' width='1' height='1'><path d='M25.5 5.5 h7 M25.5 7.5 h7 M25.5 9.5 h7 M25.5 11.5 h7' stroke='#C9CCD2' stroke-width='0.9'/></svg>
<div class='a' style='left:43.2px;top:3.2px;width:9.8px;height:9.8px;border-radius:2.2px;background:#D9A826'></div>
<svg style='left:0;top:0' width='1' height='1'><rect x='45.8' y='5.6' width='4.6' height='5' rx='0.6' fill='none' stroke='#5A4210' stroke-width='0.8'/><path d='M47.2 6.8 v2.6' stroke='#5A4210' stroke-width='0.7'/></svg>
<div class='t' style='left:56px;top:5.9px;font-size:6.3px;color:#DFE1E5'>Demo</div>
<svg style='left:0;top:0' width='1' height='1'><polyline points='76.80,7.65 78.50,9.35 80.20,7.65' fill='none' stroke='#B0B4BA' stroke-width='1'/></svg>
<div class='t' style='left:89.3px;top:5.9px;font-size:6.36px;color:#DFE1E5'>Version control</div>
<svg style='left:0;top:0' width='1' height='1'><polyline points='134.80,7.65 136.50,9.35 138.20,7.65' fill='none' stroke='#B0B4BA' stroke-width='1'/></svg>
<svg style='left:0;top:0' width='1' height='1'><rect x='400.5' y='5' width='4.5' height='6.5' rx='0.6' fill='none' stroke='#B0B4BA' stroke-width='0.8'/><rect x='403.5' y='8' width='3' height='3.5' fill='#2B2D30' stroke='#B0B4BA' stroke-width='0.7'/></svg>
<div class='t' style='left:409px;top:5.8px;font-size:6.35px;color:#DFE1E5'>Medium Phone API 35</div>
<svg style='left:0;top:0' width='1' height='1'><polyline points='475.90,7.65 477.60,9.35 479.30,7.65' fill='none' stroke='#B0B4BA' stroke-width='1'/></svg>
<svg style='left:0;top:0' width='1' height='1'><path d='M498 11 v-3 a3.5 3.5 0 0 1 7 0 v3 z' fill='none' stroke='#5FB86A' stroke-width='0.9'/><path d='M498.5 7 l-1 -2 M504.5 7 l1 -2' stroke='#5FB86A' stroke-width='0.7'/></svg>
<div class='t' style='left:508px;top:5.8px;font-size:6.6px;color:#DFE1E5'>app</div>
<svg style='left:0;top:0' width='1' height='1'><polyline points='523.30,7.65 525.00,9.35 526.70,7.65' fill='none' stroke='#B0B4BA' stroke-width='1'/></svg>
<svg style='left:0;top:0' width='1' height='1'><path d='M542.5 6 a3.2 3.2 0 1 0 0.6 3.6' fill='none' stroke='#5FB86A' stroke-width='1'/><path d='M541 5 l2.2 0.8 l-0.6 2.2' fill='none' stroke='#5FB86A' stroke-width='0.9'/></svg>
<svg style='left:0;top:0' width='1' height='1'><path d='M553 6.5 h6 v3.5 a3 3 0 0 1 -6 0 z' fill='#5FB86A'/><path d='M554.5 6.5 a1.5 1.5 0 0 1 3 0' fill='#5FB86A'/><path d='M552 8 h-1 M560 8 h1' stroke='#5FB86A' stroke-width='0.8'/></svg>
<svg style='left:0;top:0' width='1' height='1'><circle cx='574.5' cy='5' r='0.7' fill='#C9CCD2'/><circle cx='574.5' cy='8.5' r='0.7' fill='#C9CCD2'/><circle cx='574.5' cy='12' r='0.7' fill='#C9CCD2'/></svg>
<svg style='left:0;top:0' width='1' height='1'><rect x='614' y='4' width='5' height='7' rx='0.5' fill='none' stroke='#C9CCD2' stroke-width='0.8'/><circle cx='619' cy='11' r='2.2' fill='#2B2D30' stroke='#C9CCD2' stroke-width='0.8'/></svg>
<svg style='left:0;top:0' width='1' height='1'><path d='M631 9 a3.5 3.5 0 1 1 3 -3.5' fill='none' stroke='#C9CCD2' stroke-width='0.8'/><path d='M634.5 12.5 l1.5 -4.5 l1.5 4.5 M635 11 h2' fill='none' stroke='#C9CCD2' stroke-width='0.8'/></svg>
<svg style='left:0;top:0' width='1' height='1'><path d='M651 4.5 h7 M651 7 h7 M651 9.5 h4 M651 12 h4' stroke='#C9CCD2' stroke-width='0.8'/><path d='M656 10 l1.5 2 l1.5 -2' fill='none' stroke='#C9CCD2' stroke-width='0.8'/></svg>
<svg style='left:0;top:0' width='1' height='1'><path d='M670 7 a3 3 0 0 1 6 0 v3 a3 3 0 0 1 -6 0 z' fill='none' stroke='#C9CCD2' stroke-width='0.8'/><path d='M668 6 l2 1.5 M678 6 l-2 1.5 M668 10 h2 M676 10 h2 M669 13 l1.5 -1.5 M677 13 l-1.5 -1.5 M671.5 4.5 l-1 -1 M674.5 4.5 l1 -1' stroke='#C9CCD2' stroke-width='0.7'/></svg>
<svg style='left:0;top:0' width='1' height='1'><ellipse cx='691.5' cy='8.5' rx='5' ry='3' fill='none' stroke='#C9CCD2' stroke-width='0.8' transform='rotate(-20 691.5 8.5)'/><path d='M689 10.5 l2 -1.5 l2 1 l2 -2.5' fill='none' stroke='#C9CCD2' stroke-width='0.7'/></svg>
<svg style='left:0;top:0' width='1' height='1'><circle cx='712.8' cy='6.6' r='3' fill='none' stroke='#C9CCD2' stroke-width='1'/><path d='M715 8.8 l2.3 2.3' stroke='#C9CCD2' stroke-width='1'/></svg>
<svg style='left:0;top:0' width='1' height='1'><path d='M732.7 3.4 l3.9 2.25 v4.5 l-3.9 2.25 l-3.9 -2.25 v-4.5 z' fill='none' stroke='#C9CCD2' stroke-width='0.9' stroke-linejoin='round'/><circle cx='732.7' cy='7.9' r='1.5' fill='none' stroke='#C9CCD2' stroke-width='0.8'/></svg>
<svg style='left:0;top:0' width='1' height='1'><circle cx='752.7' cy='7.5' r='4.5' fill='none' stroke='#C9CCD2' stroke-width='0.9'/><circle cx='752.7' cy='6.3' r='1.5' fill='none' stroke='#C9CCD2' stroke-width='0.8'/><path d='M749.7 10.8 a3.2 2.5 0 0 1 6 0' fill='none' stroke='#C9CCD2' stroke-width='0.8'/></svg>
<svg style='left:0;top:0' width='1' height='1'><path d='M773 7.5 h6' stroke='#A8ADB5' stroke-width='0.9'/></svg>
<svg style='left:0;top:0' width='1' height='1'><rect x='793.5' y='5.5' width='5' height='5' fill='none' stroke='#A8ADB5' stroke-width='0.8'/><path d='M795 4 h5 v5' fill='none' stroke='#A8ADB5' stroke-width='0.7'/></svg>
<svg style='left:0;top:0' width='1' height='1'><path d='M818 5.5 l5 5 M823 5.5 l-5 5' stroke='#A8ADB5' stroke-width='0.8'/></svg>
<div class='a' style='left:325px;top:18px;width:111px;height:19px;background:#25301F'></div>
<svg style='left:0;top:0' width='1' height='1'><path d='M185.50 25.00 h-6.5 v6.5 h6.5' fill='none' stroke='#8E6BD6' stroke-width='0.9'/><path d='M185.30 25.40 L182.00 28.25 L185.30 31.10' fill='none' stroke='#A385E8' stroke-width='0.9'/><rect x='180.50' y='26.50' width='1.2' height='3.5' fill='#6A4FB0'/></svg>
<div class='t' style='left:189px;top:24.8px;font-size:6.65px;color:#DFE1E5'>MainActivity.kt</div>
<svg style='left:0;top:0' width='1' height='1'><path d='M237.6 26.6 l2.6 2.6 M240.2 26.6 l-2.6 2.6' stroke='#7E8288' stroke-width='0.8'/></svg>
<svg style='left:0;top:0' width='1' height='1'><path d='M253 26 l-2 2 l2 2 M257 26 l2 2 l-2 2 M256 25.5 l-2 5' fill='none' stroke='#E8925A' stroke-width='0.8'/></svg>
<div class='t' style='left:262px;top:24.8px;font-size:6.35px;color:#DFE1E5'>activity_main.xml</div>
<svg style='left:0;top:0' width='1' height='1'><circle cx='334.60' cy='28.00' r='3.3' fill='#3B4A7A' stroke='#6E8FE8' stroke-width='0.7'/><circle cx='336.40' cy='29.80' r='1.6' fill='#8A5CC0'/></svg>
<div class='t' style='left:341.3px;top:24.8px;font-size:6.45px;color:#DFE1E5'>ExampleInstrumentedTest.kt</div>
<svg style='left:0;top:0' width='1' height='1'><rect x='442.50' y='24.70' width='6.5' height='7' rx='0.8' fill='#3E7A48' stroke='#5FB86A' stroke-width='0.6'/><path d='M444.00 28.50 l1.5 1.5 l2.2 -3' fill='none' stroke='#D8F0D8' stroke-width='0.7'/></svg>
<div class='t' style='left:452px;top:24.8px;font-size:6.45px;color:#DFE1E5'>AndroidManifest.xml</div>
<svg style='left:0;top:0' width='1' height='1'><polyline points='533.80,26.40 532.20,28.00 533.80,29.60' fill='none' stroke='#6F737A' stroke-width='1'/></svg>
<svg style='left:0;top:0' width='1' height='1'><polyline points='544.20,27.10 546.00,28.90 547.80,27.10' fill='none' stroke='#C9CCD2' stroke-width='1'/></svg>
<div class='a' style='left:556px;top:22px;width:12px;height:12px;background:#393B40;border-radius:2px'></div>
<svg style='left:0;top:0' width='1' height='1'><rect x='559.5' y='24.5' width='5' height='7' fill='#8C9096'/><path d='M572 24.5 v7 M575 24.5 h3 v7 h-3 z' fill='none' stroke='#C9CCD2' stroke-width='0.8'/><rect x='586.5' y='24.5' width='7' height='7' fill='none' stroke='#C9CCD2' stroke-width='0.8'/><path d='M587 31 l3 -3 l3 3' fill='none' stroke='#C9CCD2' stroke-width='0.7'/></svg>
<div class='a' style='left:598px;top:23px;width:1px;height:10px;background:#43454A'></div>
<svg style='left:0;top:0' width='1' height='1'><circle cx='606' cy='24.5' r='0.7' fill='#C9CCD2'/><circle cx='606' cy='28' r='0.7' fill='#C9CCD2'/><circle cx='606' cy='31.5' r='0.7' fill='#C9CCD2'/></svg>
<div class='a' style='left:172px;top:36.5px;width:74px;height:1.5px;background:#A9B0BA'></div>
<div class='a' style='left:172px;top:38px;width:444px;height:1px;background:#2B2D30'></div>
<svg style='left:0;top:0' width='1' height='1'><path d='M570 41.8 l3.2 5.6 h-6.4 z' fill='#E0B84A'/><path d='M570 43.5 v2' stroke='#3A3020' stroke-width='0.7'/></svg>
<div class='t' style='left:575.2px;top:41.8px;font-size:6px;color:#A8ADB5'>1</div>
<svg style='left:0;top:0' width='1' height='1'><path d='M581.5 44.5 l2 2 l3.5 -4' fill='none' stroke='#5FB86A' stroke-width='1'/><path d='M581 47.5 h6' stroke='#5FB86A' stroke-width='0.7'/></svg>
<div class='t' style='left:589.2px;top:41.8px;font-size:6px;color:#A8ADB5'>1</div>
<svg style='left:0;top:0' width='1' height='1'><polyline points='597.30,45.55 599.00,43.85 600.70,45.55' fill='none' stroke='#8C9096' stroke-width='1'/></svg>
<svg style='left:0;top:0' width='1' height='1'><polyline points='608.60,43.85 610.30,45.55 612.00,43.85' fill='none' stroke='#8C9096' stroke-width='1'/></svg>
<div class='a' style='left:606.8px;top:60px;width:9.2px;height:424px;background:#202124'></div>
<div class='a' style='left:606px;top:60px;width:0.8px;height:424px;background:#2A2C30'></div>
<div class='a' style='left:610.5px;top:131px;width:5px;height:351px;background:#45474B;border-radius:2px'></div>
<div class='a' style='left:609.5px;top:67.5px;width:6.5px;height:1px;background:#8C9096'></div>
<div class='t' style='left:622.3px;top:25.8px;font-size:6px;font-weight:bold;color:#E6E8EC;-webkit-text-stroke:0.25px #E6E8EC'>Running Devices</div>
<svg style='left:0;top:0' width='1' height='1'><rect x='683.5' y='25' width='4.5' height='6.5' rx='0.6' fill='none' stroke='#B0B4BA' stroke-width='0.8'/><rect x='686.5' y='28' width='3' height='3.5' fill='#2B2D30' stroke='#B0B4BA' stroke-width='0.7'/></svg>
<div class='t' style='left:694px;top:25.6px;font-size:6.43px;color:#DFE1E5'>Medium Phone A...</div>
<div class='a' style='left:678.5px;top:36.4px;width:74px;height:1.4px;background:#3A62B0'></div>
<svg style='left:0;top:0' width='1' height='1'><path d='M759 25.5 v5.5 M756.2 28.2 h5.6' stroke='#A8ADB5' stroke-width='0.8'/><rect x='775' y='25.5' width='6' height='5.5' fill='none' stroke='#A8ADB5' stroke-width='0.8'/><path d='M775 26.8 h6' stroke='#A8ADB5' stroke-width='1.2'/><circle cx='790.8' cy='25' r='0.65' fill='#A8ADB5'/><circle cx='790.8' cy='28.2' r='0.65' fill='#A8ADB5'/><circle cx='790.8' cy='31.4' r='0.65' fill='#A8ADB5'/><path d='M800.8 28.2 h6' stroke='#A8ADB5' stroke-width='0.8'/></svg>
<svg style='left:0;top:0' width='1' height='1'><path d='M624 44.5 a2.8 2.8 0 1 0 4 0' fill='none' stroke='#A8ADB5' stroke-width='0.8'/><path d='M626 43 v2.5' stroke='#A8ADB5' stroke-width='0.8'/><path d='M635.5 45.5 h1.5 l2 -2 v6 l-2 -2 h-1.5 z M640.5 45 a2 2 0 0 1 0 3' fill='none' stroke='#A8ADB5' stroke-width='0.75'/><path d='M647.5 45.5 h1.5 l2 -2 v6 l-2 -2 h-1.5 z M652 46.5 h1.5' fill='none' stroke='#A8ADB5' stroke-width='0.75'/><path d='M660 42 v9' stroke='#43454A' stroke-width='0.8'/><rect x='664.5' y='43.5' width='6' height='6.5' fill='none' stroke='#A8ADB5' stroke-width='0.8'/><path d='M667.5 43.5 v6.5' stroke='#6E9BE8' stroke-width='0.9'/><path d='M669 44.5 l1.2 1 l-1.2 1' fill='none' stroke='#6E9BE8' stroke-width='0.7'/><rect x='677.5' y='43.5' width='6' height='6.5' fill='none' stroke='#A8ADB5' stroke-width='0.8'/><path d='M680.5 43.5 v6.5' stroke='#6E9BE8' stroke-width='0.9'/><path d='M689 42 v9' stroke='#43454A' stroke-width='0.8'/><path d='M698 44.5 l-2.5 2 l2.5 2 z' fill='none' stroke='#A8ADB5' stroke-width='0.75'/><path d='M708.8 43.8 l2.3 1.7 l-0.9 2.7 h-2.8 l-0.9 -2.7 z' fill='none' stroke='#A8ADB5' stroke-width='0.75'/><rect x='719.5' y='44.5' width='4' height='4' fill='none' stroke='#A8ADB5' stroke-width='0.75'/><path d='M730 42 v9' stroke='#43454A' stroke-width='0.8'/><rect x='736' y='43' width='4.5' height='6.5' fill='none' stroke='#A8ADB5' stroke-width='0.75'/><circle cx='740.5' cy='49' r='1.8' fill='#2B2D30' stroke='#A8ADB5' stroke-width='0.7'/><path d='M747 42 v9' stroke='#43454A' stroke-width='0.8'/><path d='M750 49.5 v-3.5 l1.2 -1.5 h5.6 l1.2 1.5 v3.5 z' fill='none' stroke='#A8ADB5' stroke-width='0.75'/><circle cx='754' cy='47.2' r='1.4' fill='none' stroke='#A8ADB5' stroke-width='0.7'/><rect x='763.5' y='44' width='5.5' height='5' fill='none' stroke='#A8ADB5' stroke-width='0.75'/><path d='M769 46 l2 -1 v4 l-2 -1' fill='none' stroke='#A8ADB5' stroke-width='0.75'/><path d='M775 42 v9' stroke='#43454A' stroke-width='0.8'/><path d='M785 44.5 l1.5 2 l-1.5 2' fill='none' stroke='#A8ADB5' stroke-width='0.75'/><rect x='800' y='43.5' width='6' height='5' fill='none' stroke='#A8ADB5' stroke-width='0.75'/><circle cx='805.5' cy='48.5' r='1.6' fill='#2B2D30' stroke='#A8ADB5' stroke-width='0.7'/></svg>
<div class='a' style='left:618px;top:55.8px;width:193px;height:10.8px;background:#7A7A7A'></div>
<div class='t' style='left:626px;top:58px;font-size:6.9px;color:#FFFFFF'>11:47</div>
<svg style='left:0;top:0' width='1' height='1'><rect x='644.8' y='58.8' width='4.5' height='4.5' rx='0.5' fill='#fff'/><path d='M655.8 59.5 l1 -1 h3.2 v5 h-4.2 z' fill='#fff'/><circle cx='668' cy='61' r='2.4' fill='none' stroke='#fff' stroke-width='0.8'/><path d='M666.3 59.3 l3.4 3.4' stroke='#fff' stroke-width='0.8'/><path d='M776.5 59.3 a6 6 0 0 1 8.5 0 l-4.25 4.5 z' fill='#fff'/><path d='M786 63.6 l5 -5 v5 z' fill='#fff'/><rect x='794.5' y='58.3' width='3' height='5.5' rx='0.4' fill='#fff'/></svg>
<div class='a' style='left:618px;top:66.6px;width:193px;height:407.2px;background:#FAFAFA'></div>
<div class='t' style='left:702px;top:77.6px;font-size:22.5px;color:#1B1B1F'>13</div>
<div class='a' style='left:691px;top:111px;width:48px;height:18px;border-radius:9px;background:#4A5C98'></div>
<div class='t' style='left:701.3px;top:117.3px;font-size:6.35px;font-weight:bold;color:#FFFFFF'>Click Me</div>
<div class='t' style='left:692.6px;top:457.6px;font-size:7.9px;color:#1B1B1F'>Hello Kinoko</div>
<div class='a' style='left:618px;top:473.8px;width:193px;height:10.2px;background:#000'></div>
<div class='a' style='left:689.5px;top:478.6px;width:50.5px;height:1.6px;border-radius:1px;background:#F0F0F0'></div>
<div class='a' style='left:792.3px;top:422.3px;width:12.3px;height:52.5px;border-radius:2px 2px 0 0;background:#2B2D30'></div>
<svg style='left:0;top:0' width='1' height='1'><path d='M798.4 425.5 v6 M795.4 428.5 h6' stroke='#C9CCD2' stroke-width='0.9'/><path d='M795.4 441.5 h6' stroke='#55585E' stroke-width='0.9'/><rect x='795.5' y='464.5' width='6' height='6' fill='none' stroke='#55585E' stroke-width='0.8'/></svg>
<div class='t' style='left:794.3px;top:452px;font-size:5.5px;font-weight:bold;color:#C9CCD2'>1:1</div>
<svg style='left:0;top:0' width='1' height='1'><path d='M820 32 v-4 a3.5 3.5 0 0 1 7 0 v4 l1 1 h-9 z' fill='none' stroke='#C9CCD2' stroke-width='0.8'/><path d='M822.5 34 h2' stroke='#C9CCD2' stroke-width='0.8'/><circle cx='827.5' cy='24.5' r='1.8' fill='#5A8CF0'/><ellipse cx='824' cy='47.4' rx='5' ry='3' fill='none' stroke='#C9CCD2' stroke-width='0.8' transform='rotate(-20 824 47.4)'/><path d='M821.5 49.5 l2 -1.5 l2 1 l2 -2.5' fill='none' stroke='#C9CCD2' stroke-width='0.7'/><rect x='819.5' y='62' width='5' height='8' rx='0.5' fill='none' stroke='#C9CCD2' stroke-width='0.8'/><rect x='823' y='67' width='5' height='4' rx='1' fill='#2B2D30' stroke='#C9CCD2' stroke-width='0.8'/></svg>
<div class='a' style='left:816px;top:79px;width:15px;height:15px;border-radius:3px;background:#3574F0'></div>
<svg style='left:0;top:0' width='1' height='1'><rect x='820' y='82' width='5' height='8' rx='0.5' fill='none' stroke='#fff' stroke-width='0.8'/><rect x='823' y='86' width='5' height='4' rx='1' fill='#3574F0' stroke='#fff' stroke-width='0.8'/><circle cx='828' cy='81.8' r='1.2' fill='#9FE0A0'/><path d='M824 102.5 q0.6 3.3 3.9 3.9 q-3.3 0.6 -3.9 3.9 q-0.6 -3.3 -3.9 -3.9 q3.3 -0.6 3.9 -3.9 z' fill='#E8EAEE'/><path d='M822.5 122.5 h6 M822.5 125.6 h6 M822.5 128.7 h6' stroke='#C9CCD2' stroke-width='0.9'/><circle cx='820' cy='122.5' r='0.8' fill='#C9CCD2'/><circle cx='820' cy='125.6' r='0.8' fill='#C9CCD2'/><circle cx='820' cy='128.7' r='0.8' fill='#C9CCD2'/></svg>
<div class='a' style='left:2.5px;top:20.5px;width:15px;height:15px;border-radius:3px;background:#43454A'></div>
<svg style='left:0;top:0' width='1' height='1'><path d='M6 25 h3 l1 1 h4.5 v6 h-8.5 z' fill='none' stroke='#C9CCD2' stroke-width='0.9' stroke-linejoin='round'/><circle cx='10' cy='43.5' r='1.8' fill='none' stroke='#C9CCD2' stroke-width='0.8'/><rect x='5.5' y='47.5' width='3.2' height='3.2' fill='none' stroke='#C9CCD2' stroke-width='0.8'/><rect x='11' y='47.5' width='3.2' height='3.2' fill='none' stroke='#C9CCD2' stroke-width='0.8'/><path d='M9 45 l-2 2.5 M11 45 l2 2.5' stroke='#C9CCD2' stroke-width='0.7'/><circle cx='6.5' cy='68' r='0.8' fill='#C9CCD2'/><circle cx='10' cy='68' r='0.8' fill='#C9CCD2'/><circle cx='13.5' cy='68' r='0.8' fill='#C9CCD2'/><path d='M6 354 h8 v2.5 h-8 z M9 356.5 v5 h2 v-5' fill='none' stroke='#C9CCD2' stroke-width='0.8'/><path d='M7 373.5 v8.5 l7 -4.25 z' fill='none' stroke='#C9CCD2' stroke-width='0.9' stroke-linejoin='round'/><path d='M6 395 l1.5 -2 h5 l1.5 2 l-4 4.5 z M6 395 h8' fill='none' stroke='#C9CCD2' stroke-width='0.8'/><path d='M6.5 414 l1 -1.5 l1 1.5 h3 l1 -1.5 l1 1.5 v4.5 h-7 z' fill='none' stroke='#C9CCD2' stroke-width='0.8'/><circle cx='10' cy='435.5' r='4.2' fill='none' stroke='#C9CCD2' stroke-width='0.8'/><path d='M10 433 v2.5 M10 437 v0.8' stroke='#C9CCD2' stroke-width='0.9'/><rect x='5.5' y='450.5' width='9' height='8' rx='0.6' fill='none' stroke='#C9CCD2' stroke-width='0.8'/><path d='M7.5 453 l1.5 1.2 l-1.5 1.2 M10 456 h2.5' fill='none' stroke='#C9CCD2' stroke-width='0.7'/><circle cx='7' cy='471.5' r='1.3' fill='none' stroke='#C9CCD2' stroke-width='0.8'/><circle cx='7' cy='477.5' r='1.3' fill='none' stroke='#C9CCD2' stroke-width='0.8'/><circle cx='13' cy='471.5' r='1.3' fill='none' stroke='#C9CCD2' stroke-width='0.8'/><path d='M7 472.8 v3.4 M13 472.8 q0 3 -5 4' fill='none' stroke='#C9CCD2' stroke-width='0.8'/></svg>
<svg style='left:0;top:0' width='1' height='1'><rect x='6.00' y='489.4' width='5.2' height='5.2' rx='0.8' fill='#2F4A7A' stroke='#5B86D8' stroke-width='0.7'/><rect x='40.60' y='489.4' width='5.2' height='5.2' rx='0.8' fill='#2F4A7A' stroke='#5B86D8' stroke-width='0.7'/><rect x='88.90' y='489.4' width='5.2' height='5.2' rx='0.8' fill='#2F4A7A' stroke='#5B86D8' stroke-width='0.7'/></svg>
<div class='t' style='left:13px;top:489.2px;font-size:6.2px;color:#9A9EA5'>Demo</div>
<div class='t' style='left:47.6px;top:489.2px;font-size:6.2px;color:#9A9EA5'>app</div>
<div class='t' style='left:70.6px;top:489.2px;font-size:6.2px;color:#9A9EA5'>src</div>
<div class='t' style='left:95.8px;top:489.2px;font-size:6.2px;color:#9A9EA5'>main</div>
<div class='t' style='left:121.5px;top:489.2px;font-size:6.2px;color:#9A9EA5'>java</div>
<div class='t' style='left:144.6px;top:489.2px;font-size:6.2px;color:#9A9EA5'>com</div>
<div class='t' style='left:169px;top:489.2px;font-size:6.0px;color:#9A9EA5'>example</div>
<div class='t' style='left:204.4px;top:489.2px;font-size:6.3px;color:#9A9EA5'>demo</div>
<div class='t' style='left:241.6px;top:489.2px;font-size:6.7px;color:#9A9EA5'>MainActivity.kt</div>
<div class='t' style='left:305.7px;top:489.2px;font-size:6.2px;color:#9A9EA5'>MainScreen</div>
<svg style='left:0;top:0' width='1' height='1'><polyline points='34.70,490.00 36.70,492.00 34.70,494.00' fill='none' stroke='#9A9EA5' stroke-width='1'/></svg>
<svg style='left:0;top:0' width='1' height='1'><polyline points='62.40,490.00 64.40,492.00 62.40,494.00' fill='none' stroke='#9A9EA5' stroke-width='1'/></svg>
<svg style='left:0;top:0' width='1' height='1'><polyline points='82.60,490.00 84.60,492.00 82.60,494.00' fill='none' stroke='#9A9EA5' stroke-width='1'/></svg>
<svg style='left:0;top:0' width='1' height='1'><polyline points='115.00,490.00 117.00,492.00 115.00,494.00' fill='none' stroke='#9A9EA5' stroke-width='1'/></svg>
<svg style='left:0;top:0' width='1' height='1'><polyline points='137.80,490.00 139.80,492.00 137.80,494.00' fill='none' stroke='#9A9EA5' stroke-width='1'/></svg>
<svg style='left:0;top:0' width='1' height='1'><polyline points='161.20,490.00 163.20,492.00 161.20,494.00' fill='none' stroke='#9A9EA5' stroke-width='1'/></svg>
<svg style='left:0;top:0' width='1' height='1'><polyline points='196.90,490.00 198.90,492.00 196.90,494.00' fill='none' stroke='#9A9EA5' stroke-width='1'/></svg>
<svg style='left:0;top:0' width='1' height='1'><polyline points='225.00,490.00 227.00,492.00 225.00,494.00' fill='none' stroke='#9A9EA5' stroke-width='1'/></svg>
<svg style='left:0;top:0' width='1' height='1'><polyline points='289.60,490.00 291.60,492.00 289.60,494.00' fill='none' stroke='#9A9EA5' stroke-width='1'/></svg>
<svg style='left:0;top:0' width='1' height='1'><path d='M239.50 489.20 h-6.5 v6.5 h6.5' fill='none' stroke='#8E6BD6' stroke-width='0.9'/><path d='M239.30 489.60 L236.00 492.45 L239.30 495.30' fill='none' stroke='#A385E8' stroke-width='0.9'/><rect x='234.50' y='490.70' width='1.2' height='3.5' fill='#6A4FB0'/></svg>
<svg style='left:0;top:0' width='1' height='1'><circle cx='300.6' cy='492' r='3' fill='#2F4A7A' stroke='#6E8FE8' stroke-width='0.7'/><path d='M299.2 493.2 v-2.4 h2.8 v2.4' fill='none' stroke='#C8D8F8' stroke-width='0.6'/></svg>
<div class='t' style='left:707.7px;top:488.9px;font-size:6.3px;color:#9A9EA5'>40:29</div>
<div class='t' style='left:731px;top:488.9px;font-size:6.3px;color:#9A9EA5'>LF</div>
<div class='t' style='left:745px;top:488.9px;font-size:6.3px;color:#9A9EA5'>UTF-8</div>
<div class='t' style='left:785px;top:488.9px;font-size:6.3px;color:#9A9EA5'>4 spaces</div>
<svg style='left:0;top:0' width='1' height='1'><path d='M770.5 489 h6 v4.5 h-3.5 l-1.5 1.5 v-1.5 h-1 z' fill='none' stroke='#9A9EA5' stroke-width='0.8'/><rect x='818.5' y='491.5' width='5' height='4' fill='none' stroke='#9A9EA5' stroke-width='0.8'/><path d='M822 491.5 v-1.5 a1.8 1.8 0 0 1 3.6 0' fill='none' stroke='#9A9EA5' stroke-width='0.8'/></svg>
</body></html>
